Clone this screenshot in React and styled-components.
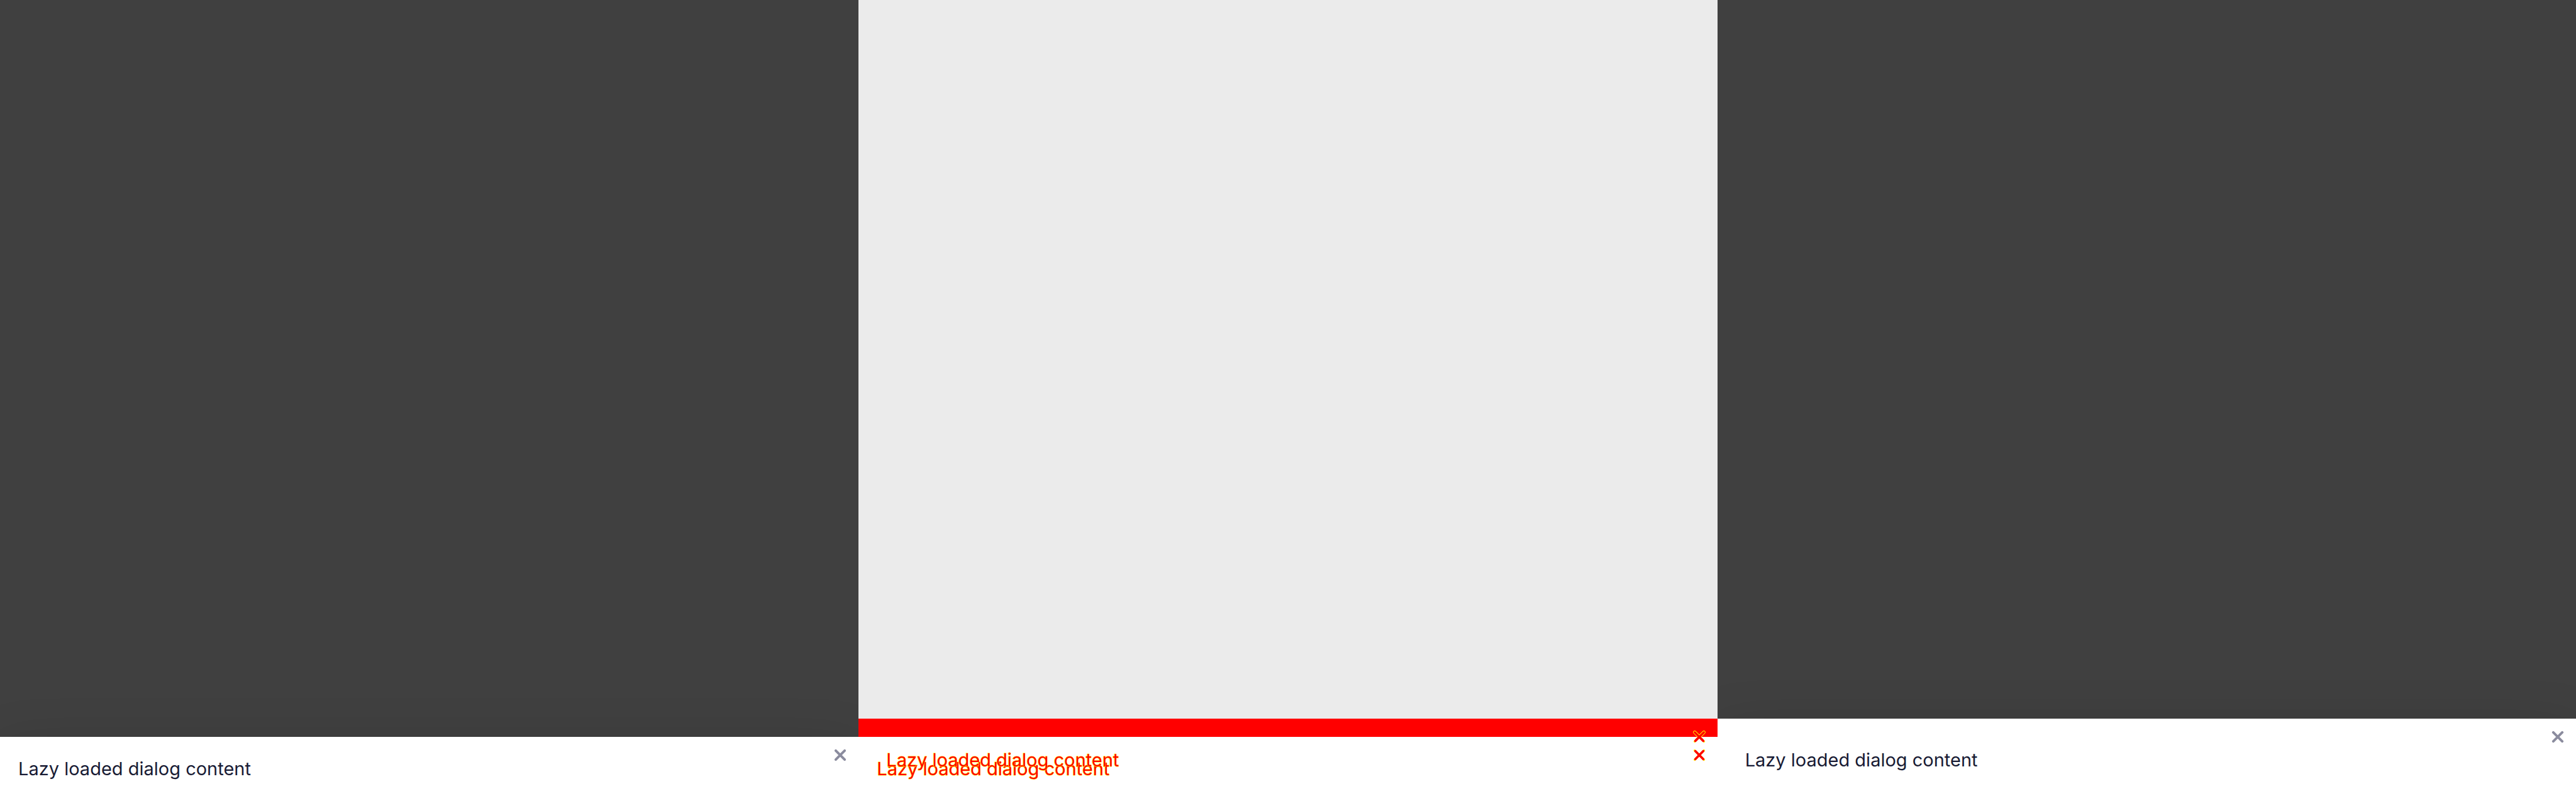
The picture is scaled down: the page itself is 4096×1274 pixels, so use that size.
import React from "react";
import styled, { createGlobalStyle } from "styled-components";

const GlobalStyle = createGlobalStyle`
  *, *::before, *::after { box-sizing: border-box; }
  body { margin: 0; background: #404040; }
`;

const Comparison = styled.main`
  display: grid;
  grid-template-columns: repeat(3, minmax(0, 1fr));
  min-height: 100vh;
  font-family: Inter, "Liberation Sans", sans-serif;
`;

const Panel = styled.section`
  display: flex;
  flex-direction: column;
  justify-content: flex-end;
  overflow: hidden;
  background: ${(p) => (p.$diff ? "#ebebeb" : "#404040")};
`;

const Sheet = styled.div`
  position: relative;
  padding: ${(p) => (p.$roomy ? "47px 44px 46px" : "32px 29px")};
  background: #fff;
  box-shadow: 0 27px 91px rgba(0, 0, 0, 0.2);
`;

const Message = styled.p`
  margin: 0;
  font-size: 29px;
  line-height: 38px;
  color: #181b34;
`;

const CloseButton = styled.button`
  position: absolute;
  top: 0;
  right: 0;
  display: flex;
  align-items: center;
  justify-content: center;
  width: 58px;
  height: 58px;
  padding: 0;
  border: 0;
  background: none;
  color: #8b8c9e;
  cursor: pointer;
`;

const DiffSheet = styled.div`
  position: relative;
  border-top: 29px solid #f00;
  padding: 32px 29px;
  background: #fff;
`;

const DiffMessage = styled(Message)`
  color: #f00;
  -webkit-text-stroke: 1px #ff0;
  paint-order: stroke fill;
`;

const ShiftedLayer = styled.div`
  position: absolute;
  inset: -29px 0 0;
  padding: 47px 44px 46px;
`;

const DiffMark = styled.div`
  position: absolute;
  top: 0;
  right: 0;
  display: flex;
  align-items: center;
  justify-content: center;
  width: 58px;
  height: 58px;
`;

const TEXT = "Lazy loaded dialog content";

function Cross() {
  return (
    <svg width="20" height="20" viewBox="0 0 20 20" aria-hidden="true">
      <path
        d="M2.9 2.9 17.1 17.1M17.1 2.9 2.9 17.1"
        stroke="currentColor"
        strokeWidth="4"
        strokeLinecap="round"
      />
    </svg>
  );
}

function DiffCross({ outlined }) {
  return (
    <svg width="22" height="22" viewBox="0 0 22 22" fill="none" aria-hidden="true">
      <g strokeLinecap="round">
        <path d="M3.7 3.7 18.3 18.3M18.3 3.7 3.7 18.3" stroke="#ff0" strokeWidth="3.6" />
        <path d="M4.6 4.6 17.4 17.4M17.4 4.6 4.6 17.4" stroke="#f00" strokeWidth="3.6" />
        {outlined && (
          <>
            <path d="M3.7 3.7 10.4 10.4M18.3 3.7 11.6 10.4" stroke="#ff0" strokeWidth="5.2" />
            <path d="M3.7 3.7 11 11 18.3 3.7" stroke="#f00" strokeWidth="3.4" />
            <path d="M11 11 16.5 16.5M11 11 5.5 16.5" stroke="#f00" strokeWidth="3.6" />
          </>
        )}
      </g>
    </svg>
  );
}

function Dialog({ roomy }) {
  return (
    <Panel>
      <Sheet role="dialog" aria-label={TEXT} $roomy={roomy}>
        <Message>{TEXT}</Message>
        <CloseButton type="button" aria-label="Close">
          <Cross />
        </CloseButton>
      </Sheet>
    </Panel>
  );
}

export default function App() {
  return (
    <>
      <GlobalStyle />
      <Comparison>
        <Dialog />
        <Panel $diff>
          <DiffSheet>
            <DiffMessage>{TEXT}</DiffMessage>
            <DiffMark>
              <DiffCross />
            </DiffMark>
            <ShiftedLayer>
              <DiffMessage>{TEXT}</DiffMessage>
              <DiffMark>
                <DiffCross outlined />
              </DiffMark>
            </ShiftedLayer>
          </DiffSheet>
        </Panel>
        <Dialog roomy />
      </Comparison>
    </>
  );
}
